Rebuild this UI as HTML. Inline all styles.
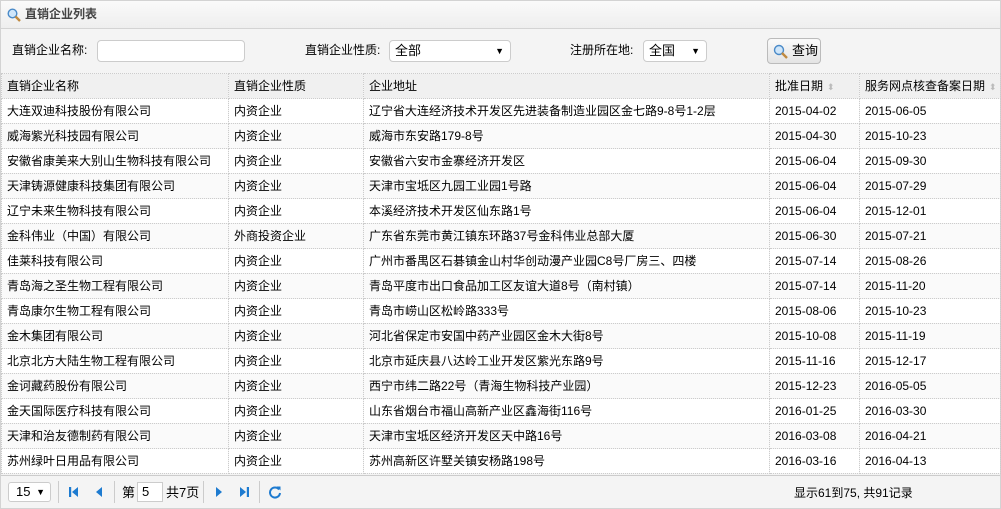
<!DOCTYPE html>
<html><head><meta charset="utf-8"><style>
*{box-sizing:border-box;margin:0;padding:0}
body{width:1001px;height:509px;background:#fff;font-family:"Liberation Sans","Noto Sans CJK SC",sans-serif;font-size:12px;color:#000;overflow:hidden;position:relative}
.wrap{position:absolute;left:0;top:0;width:1001px;height:509px;border:1px solid #d3d3d3;background:#f4f4f4}
.title{height:28px;border-bottom:1px solid #d3d3d3;background:linear-gradient(#fafafa,#eee);font-weight:bold;color:#444;padding-left:24px;line-height:27px;position:relative}
.tb{height:45px;position:relative}
.tb span{position:absolute;top:12px}
.inp{position:absolute;background:#fff;border:1px solid #ccc;border-radius:4px;height:22px;top:11px}
.sel{line-height:20px;padding-left:5px;font-size:13px}
.arr{position:absolute;right:6px;top:0;font-size:9px}
table{position:absolute;left:0;top:72px;border-collapse:collapse;width:999px;table-layout:fixed}
td,th{height:25px;border:1px dotted #ccc;padding-left:5px;font-weight:normal;text-align:left;white-space:nowrap;overflow:hidden;line-height:22px}
th{background:#f0f0f0}
tr:nth-child(odd) td{background:#fafafa}
tr.w td{background:#fff}
.sort{color:#bbb;font-size:9px;margin-left:4px}
.pg{position:absolute;left:0;top:474px;width:999px;height:33px;border-top:1px solid #ccc;background:#f4f4f4}
.pg *{position:absolute}
.sep{width:1px;height:22px;background:#ccc;top:5px}
</style></head><body><div class="wrap">
<div class="title"><svg style="position:absolute;left:6px;top:7px" width="14" height="14"><circle cx="5.5" cy="5.5" r="4.3" fill="#cfe6fa" stroke="#4a8ac8" stroke-width="1.4"/><line x1="8.5" y1="8.5" x2="13" y2="13" stroke="#c08a40" stroke-width="2.4"/></svg>直销企业列表</div>
<div class="tb">
<span style="left:11px">直销企业名称:</span>
<div class="inp" style="left:96px;width:148px"></div>
<span style="left:304px">直销企业性质:</span>
<div class="inp sel" style="left:388px;width:122px">全部<span class="arr" style="top:0">▼</span></div>
<span style="left:569px">注册所在地:</span>
<div class="inp sel" style="left:642px;width:64px">全国<span class="arr" style="top:0">▼</span></div>
<div style="position:absolute;left:766px;top:9px;width:54px;height:26px;border:1px solid #bbb;border-radius:4px;background:linear-gradient(#fafafa,#e4e4e4);line-height:24px;padding-left:24px;font-size:13px"><svg style="position:absolute;left:5px;top:5px" width="15" height="15"><circle cx="6" cy="6" r="4.5" fill="#cfe6fa" stroke="#4a8ac8" stroke-width="1.4"/><line x1="9" y1="9" x2="14" y2="14" stroke="#c08a40" stroke-width="2.4"/></svg>查询</div>
</div>
<table>
<colgroup><col style="width:227px"><col style="width:135px"><col style="width:406px"><col style="width:90px"><col style="width:141px"></colgroup>
<tr><th>直销企业名称</th><th>直销企业性质</th><th>企业地址</th><th>批准日期<span class="sort">⬍</span></th><th>服务网点核查备案日期<span class="sort">⬍</span></th></tr>
<tr class="w"><td>大连双迪科技股份有限公司</td><td>内资企业</td><td>辽宁省大连经济技术开发区先进装备制造业园区金七路9-8号1-2层</td><td>2015-04-02</td><td>2015-06-05</td></tr>
<tr><td>威海紫光科技园有限公司</td><td>内资企业</td><td>威海市东安路179-8号</td><td>2015-04-30</td><td>2015-10-23</td></tr>
<tr class="w"><td>安徽省康美来大别山生物科技有限公司</td><td>内资企业</td><td>安徽省六安市金寨经济开发区</td><td>2015-06-04</td><td>2015-09-30</td></tr>
<tr><td>天津铸源健康科技集团有限公司</td><td>内资企业</td><td>天津市宝坻区九园工业园1号路</td><td>2015-06-04</td><td>2015-07-29</td></tr>
<tr class="w"><td>辽宁未来生物科技有限公司</td><td>内资企业</td><td>本溪经济技术开发区仙东路1号</td><td>2015-06-04</td><td>2015-12-01</td></tr>
<tr><td>金科伟业（中国）有限公司</td><td>外商投资企业</td><td>广东省东莞市黄江镇东环路37号金科伟业总部大厦</td><td>2015-06-30</td><td>2015-07-21</td></tr>
<tr class="w"><td>佳莱科技有限公司</td><td>内资企业</td><td>广州市番禺区石碁镇金山村华创动漫产业园C8号厂房三、四楼</td><td>2015-07-14</td><td>2015-08-26</td></tr>
<tr><td>青岛海之圣生物工程有限公司</td><td>内资企业</td><td>青岛平度市出口食品加工区友谊大道8号（南村镇）</td><td>2015-07-14</td><td>2015-11-20</td></tr>
<tr class="w"><td>青岛康尔生物工程有限公司</td><td>内资企业</td><td>青岛市崂山区松岭路333号</td><td>2015-08-06</td><td>2015-10-23</td></tr>
<tr><td>金木集团有限公司</td><td>内资企业</td><td>河北省保定市安国中药产业园区金木大街8号</td><td>2015-10-08</td><td>2015-11-19</td></tr>
<tr class="w"><td>北京北方大陆生物工程有限公司</td><td>内资企业</td><td>北京市延庆县八达岭工业开发区紫光东路9号</td><td>2015-11-16</td><td>2015-12-17</td></tr>
<tr><td>金诃藏药股份有限公司</td><td>内资企业</td><td>西宁市纬二路22号（青海生物科技产业园）</td><td>2015-12-23</td><td>2016-05-05</td></tr>
<tr class="w"><td>金天国际医疗科技有限公司</td><td>内资企业</td><td>山东省烟台市福山高新产业区鑫海街116号</td><td>2016-01-25</td><td>2016-03-30</td></tr>
<tr><td>天津和治友德制药有限公司</td><td>内资企业</td><td>天津市宝坻区经济开发区天中路16号</td><td>2016-03-08</td><td>2016-04-21</td></tr>
<tr class="w"><td>苏州绿叶日用品有限公司</td><td>内资企业</td><td>苏州高新区许墅关镇安杨路198号</td><td>2016-03-16</td><td>2016-04-13</td></tr>
</table>
<div class="pg">
<div style="left:7px;top:6px;width:43px;height:20px;background:#fff;border:1px solid #ccc;border-radius:3px;padding-left:7px;line-height:18px;font-size:13px">15<span style="position:absolute;right:5px;top:0;font-size:9px">▼</span></div>
<div class="sep" style="left:57px"></div>
<svg style="left:67px;top:10px" width="12" height="12"><rect x="1" y="1" width="2.2" height="10" fill="#1e7bd0"/><path d="M10 1 L4 6 L10 11Z" fill="#1e7bd0"/></svg>
<svg style="left:92px;top:10px" width="12" height="12"><path d="M9 1 L3 6 L9 11Z" fill="#1e7bd0"/></svg>
<div class="sep" style="left:113px"></div>
<span style="left:121px;top:6px;font-size:13px">第</span>
<div style="left:136px;top:6px;width:26px;height:20px;background:#fff;border:1px solid #ccc;padding-left:4px;line-height:18px;font-size:13px">5</div>
<span style="left:165px;top:6px;font-size:13px">共7页</span>
<div class="sep" style="left:202px"></div>
<svg style="left:212px;top:10px" width="12" height="12"><path d="M3 1 L9 6 L3 11Z" fill="#1e7bd0"/></svg>
<svg style="left:237px;top:10px" width="12" height="12"><path d="M2 1 L8 6 L2 11Z" fill="#1e7bd0"/><rect x="8.8" y="1" width="2.2" height="10" fill="#1e7bd0"/></svg>
<div class="sep" style="left:258px"></div>
<svg style="left:267px;top:9px" width="14" height="14"><path d="M11 4.5 A5 5 0 1 0 12 8" fill="none" stroke="#1e7bd0" stroke-width="2"/><path d="M8.5 1.5 L12.5 1.5 L12.5 5.5Z" fill="#1e7bd0"/></svg>
<span style="left:793px;top:8px">显示61到75, 共91记录</span>
</div>
</div></body></html>
